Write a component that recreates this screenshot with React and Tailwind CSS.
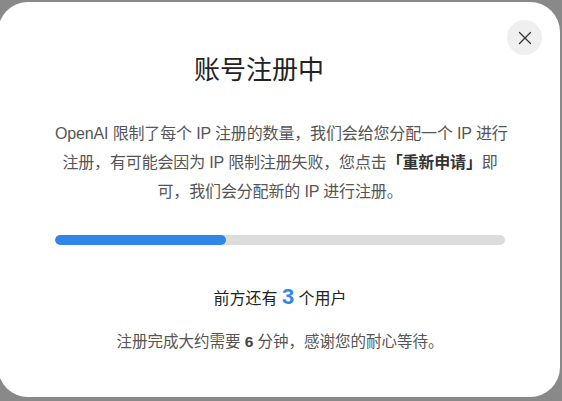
import { X } from 'lucide-react';

export default function App() {
  return (
    <div className="w-[562px] h-[401px] overflow-hidden bg-[#898989] font-['Liberation_Sans','Noto_Sans_CJK_SC',sans-serif]">
      <div className="relative ml-[-2px] mt-[2px] w-[562px] h-[395px] rounded-[30px] bg-white pt-[18px]">
        <header className="flex items-start pl-[57px] pr-[18px]">
          <h1 className="flex-1 mt-[32px] mr-[44px] text-center text-[26px] leading-[36px] font-normal text-[#222]">
            账号注册中
          </h1>
          <button
            type="button"
            className="w-[35px] h-[35px] rounded-full bg-[#efefef] flex items-center justify-center text-[#333] shrink-0"
            aria-label="关闭"
          >
            <X className="w-[22px] h-[22px]" strokeWidth={1.3} />
          </button>
        </header>

        <div className="pl-[57px] pr-[55px]">
          <p className="mt-[31px] text-center text-[16px] leading-[29px] tracking-[-0.15px] text-[#555] whitespace-nowrap">
            OpenAI 限制了每个 IP 注册的数量，我们会给您分配一个 IP 进行<br />
            注册，有可能会因为 IP 限制注册失败，您点击
            <span className="font-bold text-[#333]">「重新申请」</span>即<br />
            可，我们会分配新的 IP 进行注册。
          </p>

          <div className="mt-[29px] h-[10px] w-full rounded-full bg-[#dcdcdc] overflow-hidden">
            <div className="h-full w-[38%] rounded-full bg-[#2f86e8]" />
          </div>

          <p className="mt-[40px] text-center text-[16px] leading-[28px] text-[#222]">
            前方还有 <span className="text-[22px] leading-none font-bold text-[#2f86e8]">3</span> 个用户
          </p>

          <p className="mt-[17px] text-center text-[15.5px] leading-[24px] text-[#555]">
            注册完成大约需要 <span className="font-bold text-[#444]">6</span> 分钟，感谢您的耐心等待。
          </p>
        </div>
      </div>
    </div>
  );
}
